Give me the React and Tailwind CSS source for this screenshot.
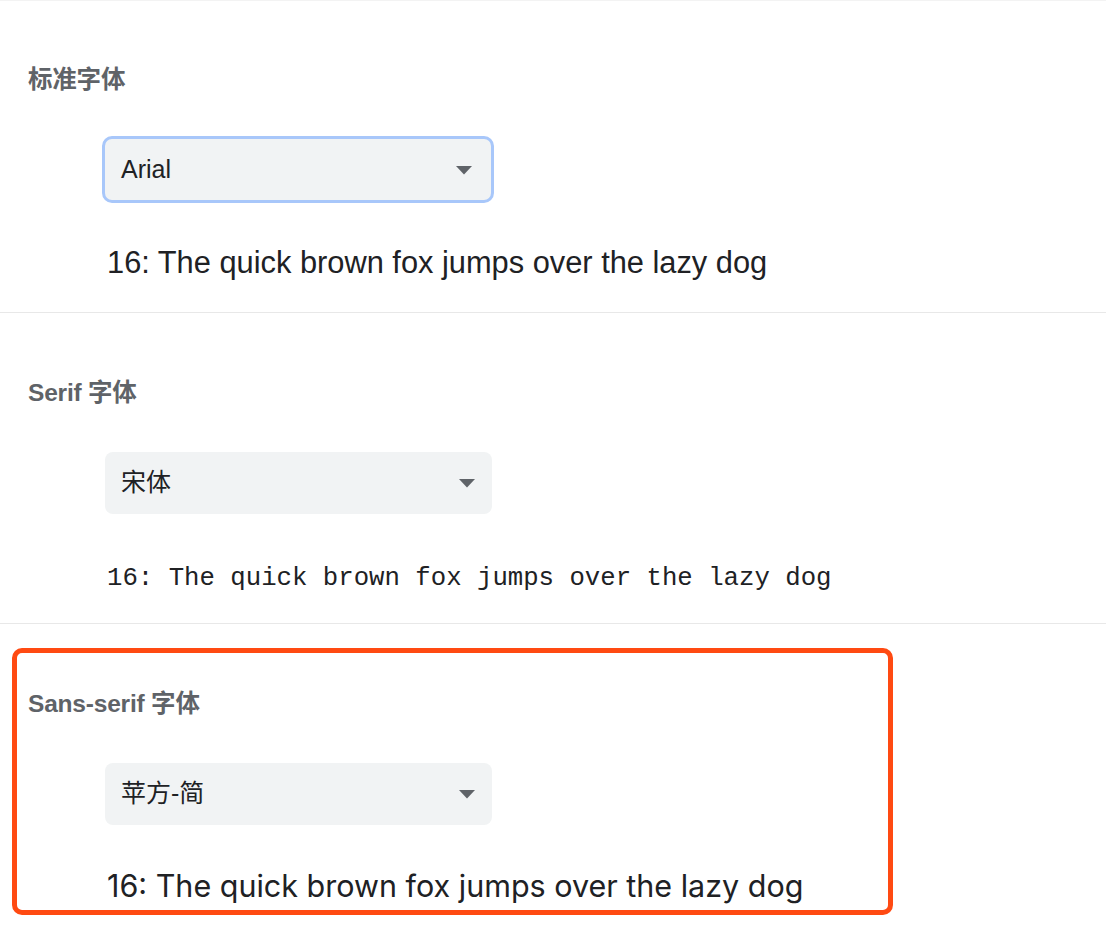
import React from "react";

const sample = "16: The quick brown fox jumps over the lazy dog";

const Caret = () => (
  <svg width="18" height="10" viewBox="0 0 18 10" className="shrink-0">
    <path d="M1 1 L17 1 L9 9.5 Z" fill="#5f6368" />
  </svg>
);

const FontSelect = ({ value, focused, font }) => (
  <div
    className={
      focused
        ? "w-[392px] h-[67px] -ml-[3px] -mt-[3px] rounded-[10px] border-[3px] border-[#a8c7fa] bg-[#f1f3f4] flex items-center justify-between pl-[16px] pr-[18px]"
        : "w-[387px] h-[62px] rounded-[8px] bg-[#f1f3f4] flex items-center justify-between pl-[16px] pr-[16px]"
    }
  >
    <span className={`text-[25px] text-[#202124] ${font}`}>{value}</span>
    <Caret />
  </div>
);

const Section = ({ title, value, focused, sampleClass }) => (
  <div>
    <h2 className="h-[28px] leading-[28px] text-[24.5px] font-bold text-[#5f6368] tracking-[-0.2px] font-['Liberation_Sans','Noto_Sans_CJK_SC',sans-serif]">
      {title}
    </h2>
    <div className="mt-[45px] ml-[77px]">
      <FontSelect
        value={value}
        focused={focused}
        font="font-['Liberation_Sans','Noto_Sans_CJK_SC',sans-serif]"
      />
    </div>
    <p className={`ml-[79px] h-[40px] leading-[40px] text-[#202124] whitespace-nowrap ${sampleClass}`}>
      {sample}
    </p>
  </div>
);

export default function App() {
  return (
    <div className="w-[1106px] h-[927px] bg-white overflow-hidden border-t border-[#f3f3f3]">
      <div className="pt-[65px] pl-[28px] pb-[27px] border-b border-[#e8e8e8]">
        <Section
          title="标准字体"
          value="Arial"
          focused
          sampleClass="mt-[40px] mb-[2px] text-[30.8px] font-['Liberation_Sans',sans-serif]"
        />
      </div>
      <div className="pt-[66px] pl-[28px] pb-[27px] border-b border-[#e8e8e8]">
        <Section
          title="Serif 字体"
          value="宋体"
          sampleClass="mt-[45px] -mb-[3px] text-[25.7px] font-['Liberation_Mono',monospace]"
        />
      </div>
      <div className="pt-[24px] pl-[12px]">
        <div className="w-[881px] border-[5px] border-[#ff4a12] rounded-[10px] pt-[37px] pl-[11px] pb-[3px]">
          <Section
            title="Sans-serif 字体"
            value="苹方-简"
            sampleClass="mt-[41px] mb-[1px] text-[30.5px] font-['Inter','Noto_Sans_CJK_SC',sans-serif]"
          />
        </div>
      </div>
    </div>
  );
}
